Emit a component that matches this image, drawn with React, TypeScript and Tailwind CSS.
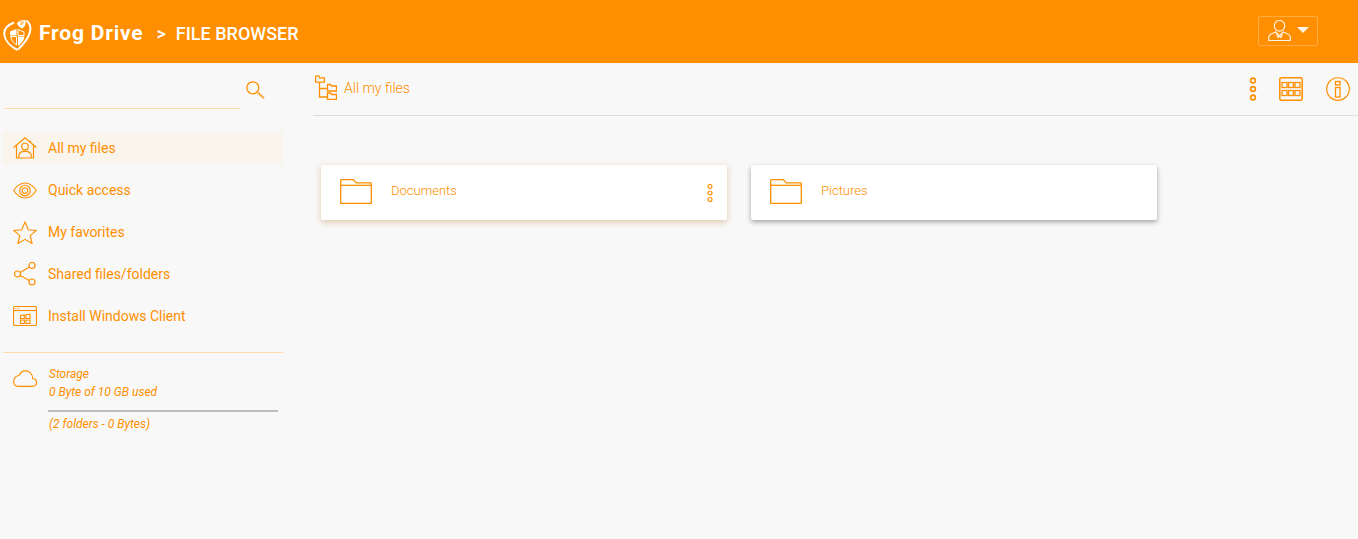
import React from "react";

const Ic = ({ w, h, vb, className = "", children, sw = 1.15 }: any) => (
  <svg width={w} height={h} viewBox={vb ?? `0 0 ${w} ${h}`} fill="none" stroke="currentColor" strokeWidth={sw} className={"shrink-0 " + className}>
    {children}
  </svg>
);

const Logo = () => (
  <svg width="29" height="32" viewBox="0 0 29 32" fill="none" className="shrink-0">
    <path d="M11 3.500C4.500 6 .8 10.500 1.300 15.500c.6 6 6 12 13.200 15.500" stroke="#fff" strokeWidth="2" />
    <path d="M23.500 1.500c3.500 3 4.500 7.500 3.300 12-1.300 5-5.300 11-11.800 17" stroke="#fff" strokeWidth="2" />
    <path d="M7 12.500 13.500 10v6.500H7.300C7 15 7 14 7 12.500Z" fill="#fff" />
    <path d="M15 17.500h6.500c-.5 4-3 7-6.500 9.500v-9.500Z" fill="#fff" />
    <path d="M7.500 17.500h6V26c-3-2-5-5-6-8.500ZM15 10.500l6 2.500v3.500h-6v-6Z" stroke="#fff" strokeWidth="1" />
    <path d="M14 4.500C15.500 1.500 19 .5 22.500 1c.8 3-.3 6.500-3 8.500-2.500-.5-4.500-2.500-5.500-5Z" fill="#fff" />
    <path d="M18 1.500v4.500M20.500 2l-1.500 4" stroke="#ff8f00" strokeWidth=".8" />
  </svg>
);

const Search = () => (
  <Ic w={19} h={18} sw={1.3}>
    <circle cx="6.800" cy="6.800" r="6" />
    <path d="M11.500 11.200l6.500 6" strokeWidth="2" opacity=".75" />
  </Ic>
);

const HomeI = () => (
  <Ic w={24} h={22}>
    <path d="M.7 10.500 12 .8l11.300 9.700M3.500 8.500V21h17V8.500M17.500 3.500V6" />
    <circle cx="12" cy="9.500" r="3.300" />
    <path d="M5.800 21v-2.500c0-2.500 2.500-4.200 6.200-4.200s6.200 1.700 6.200 4.200V21" />
  </Ic>
);
const EyeI = () => (
  <Ic w={24} h={17}>
    <path d="M.7 8.500C4 3.500 8 1 12 1s8 2.500 11.300 7.500C20 13.500 16 16 12 16S4 13.500.7 8.500Z" />
    <circle cx="12" cy="8.500" r="5.300" />
    <circle cx="12" cy="8.500" r="2.800" />
  </Ic>
);
const StarI = () => (
  <Ic w={24} h={23}>
    <path d="M12 1l3.300 7.700 8 .7-6.100 5.200 1.900 7.900L12 18.300 4.900 22.500l1.900-7.900L.7 9.400l8-.7L12 1Z" />
  </Ic>
);
const ShareI = () => (
  <Ic w={22} h={24}>
    <circle cx="3.500" cy="12" r="3" />
    <circle cx="18" cy="3.500" r="3" />
    <circle cx="18" cy="20" r="3" />
    <path d="M6.200 10.500 15.300 5M6.200 13.500l9.100 5" />
  </Ic>
);
const WinI = () => (
  <Ic w={24} h={20}>
    <rect x=".5" y=".5" width="23" height="19" rx="1.500" />
    <path d="M.5 4.500h23" />
    <path d="M2.500 2.500h1M5 2.500h1" />
    <path d="M7.500 9.500l3.800-.6v3.600H7.500zM7.500 14h3.800v3.500H7.500zM13 8.800l4-.6v4.300h-4zM13 14h4v3.500h-4z" />
  </Ic>
);
const CloudI = () => (
  <Ic w={24} h={17}>
    <path d="M5 16.300h14.500c2.300 0 4-1.600 4-3.800 0-2.200-1.600-3.800-3.700-3.800C19.300 4 16.300.8 12.500.8 9.500.8 7.300 2.600 6.300 5.300 3 6 .7 8.500.7 11.500c0 2.800 1.800 4.800 4.300 4.800Z" />
  </Ic>
);
const TreeI = () => (
  <Ic w={22} h={25} sw={1.3}>
    <path d="M.6 1.200v6h8.800V2.800H4.500L3.800.8H1Z" />
    <path d="M4.500 7.500V22h7.500M4.500 13.500h7.500" />
    <path d="M12.500 9.500v6.500h9v-5H16.500l-1-1.500Z" />
    <path d="M12.500 18v6.500h9v-5H16.500l-1-1.500Z" />
  </Ic>
);
const Dots = ({ big }: { big?: boolean }) =>
  big ? (
    <Ic w={8} h={24} sw={1.6}>
      <circle cx="4" cy="3.500" r="2.400" />
      <circle cx="4" cy="12" r="2.400" />
      <circle cx="4" cy="20.500" r="2.400" />
    </Ic>
  ) : (
    <Ic w={6} h={18} sw={1.2}>
      <circle cx="3" cy="2.500" r="2" />
      <circle cx="3" cy="9" r="2" />
      <circle cx="3" cy="15.500" r="2" />
    </Ic>
  );
const GridI = () => (
  <Ic w={24} h={24} sw={1.5}>
    <rect x=".8" y=".8" width="22.400" height="22.400" rx="1.500" />
    <g strokeWidth="1.300">
      <rect x="3" y="5.500" width="5" height="5" />
      <rect x="9.500" y="5.500" width="5" height="5" />
      <rect x="16" y="5.500" width="5" height="5" />
      <rect x="3" y="13.500" width="5" height="5" />
      <rect x="9.500" y="13.500" width="5" height="5" />
      <rect x="16" y="13.500" width="5" height="5" />
    </g>
  </Ic>
);
const InfoI = () => (
  <Ic w={24} h={24}>
    <circle cx="12" cy="12" r="11.300" />
    <rect x="9.500" y="4.500" width="4.500" height="3.500" strokeWidth="1.300" />
    <rect x="9.500" y="10.500" width="4.500" height="9.500" strokeWidth="1.300" />
  </Ic>
);
const FolderI = () => (
  <Ic w={32} h={25} sw={1.3}>
    <path d="M.7 24V1.500c0-.5.4-.8.800-.8h11.800l3 3.200h14.200c.5 0 .8.300.8.800V24c0 .3-.2.400-.4.400H1.100c-.2 0-.4-.1-.4-.4Z" />
    <path d="M.7 6.300h30.600" />
  </Ic>
);
const UserI = () => (
  <Ic w={23} h={21} className="opacity-90">
    <circle cx="11.500" cy="5.800" r="5.300" />
    <path d="M.7 20.500v-3c0-2 1.500-3.300 4-4.200l3-1.300 3.800 4 3.800-4 3 1.300c2.500.9 4 2.200 4 4.200v3H.7Z" />
    <path d="M8.500 13.500l1.500 4 1.500-1.500 1.500 1.500 1.500-4" />
  </Ic>
);

const nav = [
  { label: "All my files", icon: <HomeI />, active: true },
  { label: "Quick access", icon: <EyeI /> },
  { label: "My favorites", icon: <StarI /> },
  { label: "Shared files/folders", icon: <ShareI /> },
  { label: "Install Windows Client", icon: <WinI /> },
];

const Card = ({ name, tone, dots }: { name: string; tone: string; dots?: boolean }) => (
  <div className={"flex h-[55px] w-[406px] items-center rounded-[2px] bg-white pb-[3px] pl-[19px] pr-[14px] " + tone}>
    <FolderI />
    <span className="ml-[19px] flex-1 text-[13px] font-light">{name}</span>
    {dots && <div className="mt-[3px]"><Dots /></div>}
  </div>
);

export default function App() {
  return (
    <div className="flex h-[539px] w-full flex-col overflow-hidden bg-[#f8f8f8] font-['Roboto',sans-serif] text-[#ff8f00]">
      <header className="flex h-[63px] shrink-0 items-center bg-[#ff8f00] pl-[3px] pr-10 text-white">
        <div className="mt-[6px]"><Logo /></div>
        <span className="ml-[7px] mt-[4px] text-[21px] font-bold tracking-[0.8px]">Frog Drive</span>
        <span className="ml-[13px] mt-[4px] text-lg font-medium">&gt;</span>
        <span className="ml-[10px] mt-[4px] text-lg font-medium">FILE BROWSER</span>
        <div className="mb-[2px] ml-auto flex h-[30px] w-[60px] items-center rounded-[2px] border border-white/25 pl-[9px]">
          <UserI />
          <span className="ml-[6px] mb-[2px] h-0 w-0 border-x-[6px] border-t-[6px] border-x-transparent border-t-white/90" />
        </div>
      </header>
      <div className="flex flex-1">
        <aside className="flex w-[283px] shrink-0 flex-col pl-[3px]">
          <div className="flex h-[46px] items-end">
            <div className="ml-[2px] h-px w-[235px] bg-[#ffdcae]" />
            <div className="mb-[10px] ml-[6px]"><Search /></div>
          </div>
          <nav className="mt-[23px] flex flex-col gap-[10px]">
            {nav.map((n) => (
              <div key={n.label} className={"flex h-8 items-center pl-[10px] text-sm " + (n.active ? "bg-[#f9f4ec]" : "")}>
                <span className="flex w-6 justify-center">{n.icon}</span>
                <span className="ml-[11px]">{n.label}</span>
              </div>
            ))}
          </nav>
          <div className="mt-[20px] h-px w-full bg-[#ffdcae]" />
          <div className="mt-[12px] flex pl-[10px]">
            <div className="mt-[5px]"><CloudI /></div>
            <div className="ml-[11px] flex-1 pr-[5px] text-xs italic leading-[18px]">
              <div className="ml-px">Storage</div>
              <div className="ml-px">0 Byte of 10 GB used</div>
              <div className="mt-[9px] h-[2px] w-full bg-[#bdbdbd]" />
              <div className="mt-[3px] ml-px">(2 folders - 0 Bytes)</div>
            </div>
          </div>
        </aside>
        <main className="ml-[30px] flex flex-1 flex-col">
          <div className="flex h-[53px] items-center border-b border-[#dedede] pr-2 pl-[2px]">
            <div className="mb-[3px]"><TreeI /></div>
            <span className="mb-[2px] ml-[7px] text-sm font-light">All my files</span>
            <div className="mb-[1px] ml-auto flex items-center">
              <Dots big />
              <span className="ml-[22px]"><GridI /></span>
              <span className="ml-[23px]"><InfoI /></span>
            </div>
          </div>
          <div className="mt-[49px] flex gap-6 pl-2">
            <Card name="Documents" dots tone="shadow-[0_2px_6px_rgba(190,140,70,0.45)]" />
            <Card name="Pictures" tone="shadow-[0_2px_5px_rgba(0,0,0,0.35)]" />
          </div>
        </main>
      </div>
    </div>
  );
}
